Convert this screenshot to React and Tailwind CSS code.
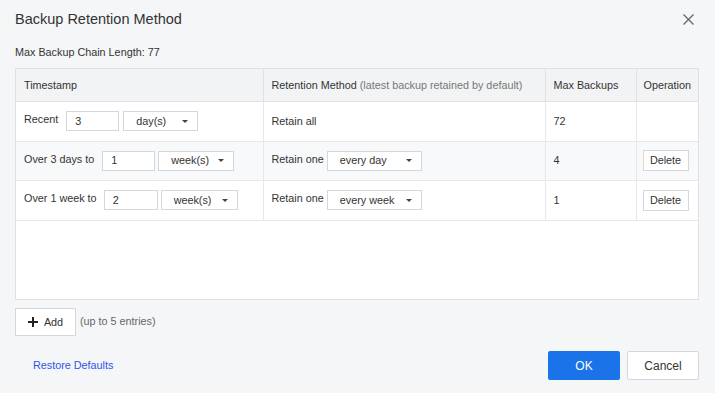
import React from "react";

function Caret() {
  return (
    <svg width="6" height="3" viewBox="0 0 6 3" className="shrink-0">
      <path d="M0 0h6L3 3z" fill="#444" />
    </svg>
  );
}

function Input({ value, w }) {
  return (
    <div className={`h-5 ${w} border border-[#d4d7dc] bg-white flex items-center pl-[8px] text-[10.8px] text-[#333]`}>
      {value}
    </div>
  );
}

function Select({ value, w }) {
  return (
    <div className={`h-5 ${w} border border-[#d4d7dc] bg-white flex items-center justify-between pl-[12px] pr-[9px] text-[10.8px] text-[#333]`}>
      <span>{value}</span>
      <Caret />
    </div>
  );
}

function DeleteBtn() {
  return (
    <div className="h-[21px] w-[46px] border border-[#d4d7dc] bg-white flex items-center justify-center text-[10.8px] text-[#333]">
      Delete
    </div>
  );
}

export default function App() {
  return (
    <div
      className="w-[715px] h-[393px] bg-[#f5f6f8] text-[#333] relative overflow-hidden"
      style={{ fontFamily: '"Liberation Sans", Arial, sans-serif' }}
    >
      <div className="flex items-center justify-between pl-[15px] pr-[21px] pt-[9px] h-[30px]">
        <div className="text-[14.5px] text-[#333]">Backup Retention Method</div>
        <svg width="11" height="11" viewBox="0 0 11 11">
          <path d="M0.5 0.5L10.5 10.5M10.5 0.5L0.5 10.5" stroke="#666" strokeWidth="1.3" />
        </svg>
      </div>
      <div className="pl-[15px] mt-[16px] text-[10.8px] leading-[13px] text-[#333]">Max Backup Chain Length: 77</div>
      <div className="ml-[15px] mt-[9px] w-[684px] h-[232px] border border-[#dfe1e6] bg-white">
        <table className="w-full border-collapse table-fixed text-[10.8px] text-[#333]">
          <colgroup>
            <col className="w-[247px]" />
            <col className="w-[282px]" />
            <col className="w-[91px]" />
            <col />
          </colgroup>
          <thead>
            <tr className="h-[32px] bg-[#f2f3f5]">
              <th className="font-normal text-left pl-[8px] border-r border-b border-[#dfe1e6]">Timestamp</th>
              <th className="font-normal text-left pl-[8px] border-r border-b border-[#dfe1e6] whitespace-nowrap">
                Retention Method <span className="text-[#777]">(latest backup retained by default)</span>
              </th>
              <th className="font-normal text-left pl-[8px] border-r border-b border-[#dfe1e6]">Max Backups</th>
              <th className="font-normal text-left pl-[7px] border-b border-[#dfe1e6]">Operation</th>
            </tr>
          </thead>
          <tbody>
            <tr className="h-[40px]">
              <td className="pl-[8px] border-r border-b border-[#e6e8eb]">
                <div className="flex items-center">
                  <span className="mr-[8px] -mt-[3px]">Recent</span>
                  <Input value="3" w="w-[53px]" />
                  <div className="w-[4px]" />
                  <Select value="day(s)" w="w-[75px]" />
                </div>
              </td>
              <td className="pl-[8px] border-r border-b border-[#e6e8eb]">Retain all</td>
              <td className="pl-[8px] border-r border-b border-[#e6e8eb]">72</td>
              <td className="border-b border-[#e6e8eb]"></td>
            </tr>
            <tr className="h-[39px] bg-[#f8f9fb]">
              <td className="pl-[8px] border-r border-b border-[#e6e8eb]">
                <div className="flex items-center">
                  <span className="mr-[8px] -mt-[3px]">Over 3 days to</span>
                  <Input value="1" w="w-[53px]" />
                  <div className="w-[3px]" />
                  <Select value="week(s)" w="w-[76px]" />
                </div>
              </td>
              <td className="pl-[8px] border-r border-b border-[#e6e8eb]">
                <div className="flex items-center">
                  <span className="mr-[3px] -mt-[3px]">Retain one</span>
                  <Select value="every day" w="w-[95px]" />
                </div>
              </td>
              <td className="pl-[8px] border-r border-b border-[#e6e8eb]">4</td>
              <td className="pl-[6px] border-b border-[#e6e8eb]">
                <DeleteBtn />
              </td>
            </tr>
            <tr className="h-[40px]">
              <td className="pl-[8px] border-r border-b border-[#e6e8eb]">
                <div className="flex items-center">
                  <span className="mr-[7px] -mt-[3px]">Over 1 week to</span>
                  <Input value="2" w="w-[54px]" />
                  <div className="w-[3px]" />
                  <Select value="week(s)" w="w-[77px]" />
                </div>
              </td>
              <td className="pl-[8px] border-r border-b border-[#e6e8eb]">
                <div className="flex items-center">
                  <span className="mr-[3px] -mt-[3px]">Retain one</span>
                  <Select value="every week" w="w-[95px]" />
                </div>
              </td>
              <td className="pl-[8px] border-r border-b border-[#e6e8eb]">1</td>
              <td className="pl-[6px] border-b border-[#e6e8eb]">
                <DeleteBtn />
              </td>
            </tr>
          </tbody>
        </table>
      </div>
      <div className="flex items-center ml-[15px] mt-[8px]">
        <div className="h-[28px] w-[61px] border border-[#d4d7dc] bg-white flex items-center justify-center gap-[6px] text-[10.8px] text-[#333]">
          <svg width="10" height="10" viewBox="0 0 10 10">
            <path d="M5 0V10M0 5H10" stroke="#222" strokeWidth="2" />
          </svg>
          <span>Add</span>
        </div>
        <span className="ml-[4px] text-[10.8px] text-[#666] -mt-[2px]">(up to 5 entries)</span>
      </div>
      <div className="flex items-center justify-between ml-[33px] mr-[16px] mt-[15px]">
        <span className="text-[10.8px] text-[#2f54eb]">Restore Defaults</span>
        <div className="flex gap-[7px]">
          <div className="h-[29px] w-[72px] bg-[#1a73e8] rounded-[2px] flex items-center justify-center text-[12px] text-white">OK</div>
          <div className="h-[29px] w-[72px] bg-white border border-[#d4d7dc] rounded-[2px] flex items-center justify-center text-[12px] text-[#333]">Cancel</div>
        </div>
      </div>
    </div>
  );
}
